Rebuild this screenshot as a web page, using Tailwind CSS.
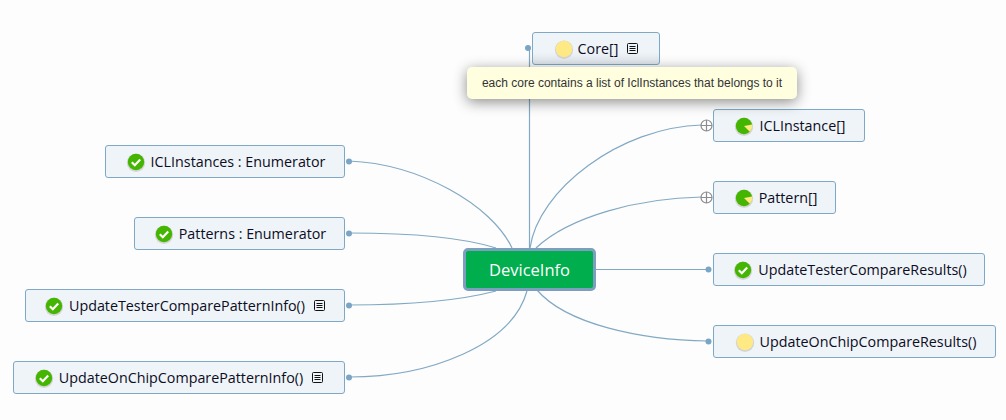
<!DOCTYPE html>
<html lang="en">
<head>
<meta charset="UTF-8">
<title>DeviceInfo</title>
<script src="https://cdn.jsdelivr.net/npm/@tailwindcss/browser@4"></script>
</head>
<body class="bg-[#fdfdfd]">
<div class="relative w-[1006px] h-[420px] overflow-hidden bg-[#fdfdfd] font-['Open_Sans','Noto_Sans',sans-serif] text-[14.3px] text-[#0c0c24]">

  <!-- connectors -->
  <svg class="absolute left-0 top-0" width="1006" height="420" fill="none" stroke="#82a9c4" stroke-width="1.2">
    <path d="M529.500 47V250"/>
    <path d="M530 248C538 190 620 127 702 125"/>
    <path d="M536 248C570 216 640 198 702 197"/>
    <path d="M596 269.500H708"/>
    <path d="M537 290C566 324 640 340 708 341"/>
    <path d="M349 161C420 164 492 205 512 248"/>
    <path d="M349 233C400 233 458 236 496 248"/>
    <path d="M349 305C400 305 458 301 496 291"/>
    <path d="M349 377C430 377 512 345 527 291"/>
    <g fill="#7ba5c4" stroke="none">
      <circle cx="528" cy="48" r="3"/>
      <circle cx="708.500" cy="269.500" r="3"/>
      <circle cx="708.500" cy="341.500" r="3"/>
      <circle cx="349" cy="161.500" r="3"/>
      <circle cx="349" cy="233.500" r="3"/>
      <circle cx="349" cy="305.500" r="3"/>
      <circle cx="349" cy="377.500" r="3"/>
    </g>
    <g fill="#fff" stroke="#8c8c8c">
      <circle cx="706.500" cy="125.500" r="5.500"/>
      <path d="M701 125.500H712M706.500 120V131"/>
      <circle cx="706.500" cy="197.500" r="5.500"/>
      <path d="M701 197.500H712M706.500 192V203"/>
    </g>
  </svg>

  <!-- left nodes -->
  <div class="absolute left-[105px] top-[145px] w-[240px] h-[33px] flex items-center justify-center gap-[5px] pl-[1px] rounded-[3px] border border-[#7fa8c6] bg-[#eff4f8]">
    <svg width="20" height="20" viewBox="0 0 20 20"><circle cx="10" cy="10.800" r="9.200" fill="#d4d4d4"/><circle cx="10" cy="10" r="8.200" fill="#44b500"/><path d="M5.800 10.300l3 2.900 5.400-5.600" fill="none" stroke="#fff" stroke-width="2.200"/></svg>
    <span>ICLInstances : Enumerator</span>
  </div>
  <div class="absolute left-[134px] top-[217px] w-[211px] h-[33px] flex items-center justify-center gap-[5px] pl-[1px] rounded-[3px] border border-[#7fa8c6] bg-[#eff4f8]">
    <svg width="20" height="20" viewBox="0 0 20 20"><circle cx="10" cy="10.800" r="9.200" fill="#d4d4d4"/><circle cx="10" cy="10" r="8.200" fill="#44b500"/><path d="M5.800 10.300l3 2.900 5.400-5.600" fill="none" stroke="#fff" stroke-width="2.200"/></svg>
    <span>Patterns : Enumerator</span>
  </div>
  <div class="absolute left-[25px] top-[289px] w-[320px] h-[33px] flex items-center justify-center gap-[5px] pr-[1px] rounded-[3px] border border-[#7fa8c6] bg-[#eff4f8]">
    <svg width="20" height="20" viewBox="0 0 20 20"><circle cx="10" cy="10.800" r="9.200" fill="#d4d4d4"/><circle cx="10" cy="10" r="8.200" fill="#44b500"/><path d="M5.800 10.300l3 2.900 5.400-5.600" fill="none" stroke="#fff" stroke-width="2.200"/></svg>
    <span>UpdateTesterComparePatternInfo()</span>
    <svg class="ml-[4px]" width="11" height="11" viewBox="0 0 11 11" fill="none" stroke="#111"><rect x="0.500" y="0.500" width="10" height="10" rx="1"/><path d="M2.500 3.500H8.500M2.500 5.500H8.500M2.500 7.500H8.500"/></svg>
  </div>
  <div class="absolute left-[13px] top-[361px] w-[332px] h-[33px] flex items-center justify-center gap-[5px] pr-[1px] rounded-[3px] border border-[#7fa8c6] bg-[#eff4f8]">
    <svg width="20" height="20" viewBox="0 0 20 20"><circle cx="10" cy="10.800" r="9.200" fill="#d4d4d4"/><circle cx="10" cy="10" r="8.200" fill="#44b500"/><path d="M5.800 10.300l3 2.900 5.400-5.600" fill="none" stroke="#fff" stroke-width="2.200"/></svg>
    <span>UpdateOnChipComparePatternInfo()</span>
    <svg class="ml-[4px]" width="11" height="11" viewBox="0 0 11 11" fill="none" stroke="#111"><rect x="0.500" y="0.500" width="10" height="10" rx="1"/><path d="M2.500 3.500H8.500M2.500 5.500H8.500M2.500 7.500H8.500"/></svg>
  </div>

  <!-- root -->
  <div class="absolute left-[463px] top-[248px] w-[133px] h-[43px] flex items-center justify-center pt-[1px] rounded-[5px] border-[3px] border-[#7c9fc0] bg-[#00ae4e] text-white text-[16.500px]">DeviceInfo</div>

  <!-- right nodes -->
  <div class="absolute left-[532px] top-[32px] w-[128px] h-[33px] flex items-center justify-center gap-[4px] rounded-[3px] border border-[#7fa8c6] bg-gradient-to-b from-[#eff4f8] from-60% to-[#dfe6ec]">
    <svg width="20" height="20" viewBox="0 0 20 20"><circle cx="10" cy="10.800" r="9.200" fill="#d4d4d4"/><circle cx="10" cy="10" r="8.200" fill="#ffe985"/></svg>
    <span>Core[]</span>
    <svg class="ml-[5px]" width="11" height="11" viewBox="0 0 11 11" fill="none" stroke="#111"><rect x="0.500" y="0.500" width="10" height="10" rx="1"/><path d="M2.500 3.500H8.500M2.500 5.500H8.500M2.500 7.500H8.500"/></svg>
  </div>
  <div class="absolute left-[713px] top-[109px] w-[152px] h-[33px] flex items-center justify-center gap-[5px] pl-[2px] rounded-[3px] border border-[#7fa8c6] bg-[#eff4f8]">
    <svg width="20" height="20" viewBox="0 0 20 20"><circle cx="10" cy="10.800" r="9.200" fill="#d4d4d4"/><circle cx="10" cy="10" r="8.200" fill="#44b500"/><path d="M10 10L18.200 8.500A8.200 8.200 0 0 1 15.800 15.800Z" fill="#ffe985"/></svg>
    <span>ICLInstance[]</span>
  </div>
  <div class="absolute left-[713px] top-[181px] w-[123px] h-[33px] flex items-center justify-center gap-[5px] pl-[2px] rounded-[3px] border border-[#7fa8c6] bg-[#eff4f8]">
    <svg width="20" height="20" viewBox="0 0 20 20"><circle cx="10" cy="10.800" r="9.200" fill="#d4d4d4"/><circle cx="10" cy="10" r="8.200" fill="#44b500"/><path d="M10 10L18.200 8.500A8.200 8.200 0 0 1 15.800 15.800Z" fill="#ffe985"/></svg>
    <span>Pattern[]</span>
  </div>
  <div class="absolute left-[713px] top-[253px] w-[272px] h-[33px] flex items-center justify-center gap-[5px] pl-[2px] rounded-[3px] border border-[#7fa8c6] bg-[#eff4f8]">
    <svg width="20" height="20" viewBox="0 0 20 20"><circle cx="10" cy="10.800" r="9.200" fill="#d4d4d4"/><circle cx="10" cy="10" r="8.200" fill="#44b500"/><path d="M5.800 10.300l3 2.900 5.400-5.600" fill="none" stroke="#fff" stroke-width="2.200"/></svg>
    <span>UpdateTesterCompareResults()</span>
  </div>
  <div class="absolute left-[713px] top-[325px] w-[283px] h-[33px] flex items-center justify-center gap-[5px] pl-[2px] rounded-[3px] border border-[#7fa8c6] bg-[#eff4f8]">
    <svg width="20" height="20" viewBox="0 0 20 20"><circle cx="10" cy="10.800" r="9.200" fill="#d4d4d4"/><circle cx="10" cy="10" r="8.200" fill="#ffe985"/></svg>
    <span>UpdateOnChipCompareResults()</span>
  </div>

  <!-- tooltip -->
  <div class="absolute left-[467px] top-[67px] w-[330px] h-[32px] flex items-center justify-center rounded-[5px] bg-[#ffffe0] shadow-[0_3px_14px_rgba(0,0,0,0.45)] font-['Liberation_Sans',sans-serif] text-[12px] text-[#333]">each core contains a list of IclInstances that belongs to it</div>
</div>
</body>
</html>
